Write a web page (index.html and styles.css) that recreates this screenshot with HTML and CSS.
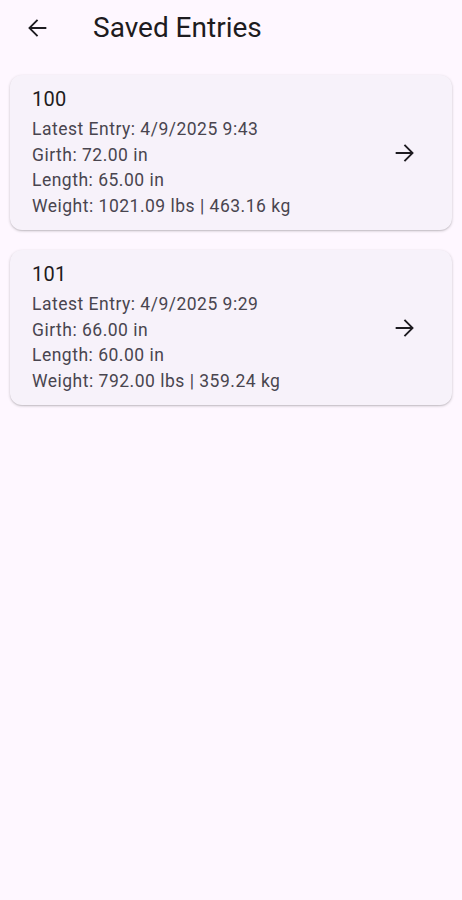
FILE: index.html
```html
<!DOCTYPE html>
<html>
<head>
<meta charset="utf-8">
<link rel="stylesheet" href="styles.css">
</head>
<body>
<header class="appbar">
  <button class="back" aria-label="Back">
    <svg width="28" height="28" viewBox="0 0 24 24"><path d="M20 11.2H7.5l5.55-5.55L11.9 4.5 4.4 12l7.5 7.5 1.15-1.15-5.55-5.55H20z" fill="#1d1b20"/></svg>
  </button>
  <h1 class="title">Saved Entries</h1>
</header>
<main class="list">
  <div class="card">
    <div class="info">
      <div class="name">100</div>
      <div class="line">Latest Entry: 4/9/2025 9:43</div>
      <div class="line">Girth: 72.00 in</div>
      <div class="line">Length: 65.00 in</div>
      <div class="line">Weight: 1021.09 lbs | 463.16 kg</div>
    </div>
    <svg class="go" width="28" height="28" viewBox="0 0 24 24"><path d="M4 11.2h12.5l-5.55-5.55L12.1 4.5l7.5 7.5-7.5 7.5-1.15-1.15 5.55-5.55H4z" fill="#1d1b20"/></svg>
  </div>
  <div class="card">
    <div class="info">
      <div class="name">101</div>
      <div class="line">Latest Entry: 4/9/2025 9:29</div>
      <div class="line">Girth: 66.00 in</div>
      <div class="line">Length: 60.00 in</div>
      <div class="line">Weight: 792.00 lbs | 359.24 kg</div>
    </div>
    <svg class="go" width="28" height="28" viewBox="0 0 24 24"><path d="M4 11.2h12.5l-5.55-5.55L12.1 4.5l7.5 7.5-7.5 7.5-1.15-1.15 5.55-5.55H4z" fill="#1d1b20"/></svg>
  </div>
</main>
</body>
</html>
```
FILE: styles.css
```css
html, body {
  margin: 0;
  padding: 0;
  background: #fef7ff;
  font-family: Roboto, "Noto Sans", sans-serif;
  color: #1d1b20;
}
.appbar {
  height: 56px;
  display: flex;
  align-items: center;
  padding-left: 13px;
}
.back {
  width: 48px;
  height: 48px;
  border: none;
  background: none;
  padding: 0;
  display: flex;
  align-items: center;
  justify-content: center;
}
.title {
  margin: 0 0 0 32px;
  font-size: 28px;
  line-height: 36px;
  font-weight: 400;
  color: #1d1b20;
}
.list {
  padding: 19px 10px;
  display: flex;
  flex-direction: column;
  gap: 20px;
}
.card {
  background: #f7f2fa;
  border-radius: 12px;
  box-shadow: 0 1px 3px rgba(0,0,0,0.2), 0 1px 1px rgba(0,0,0,0.08);
  display: flex;
  align-items: center;
  padding: 11px 33px 10px 22px;
}
.info {
  flex: 1;
}
.name {
  font-size: 20px;
  line-height: 26px;
  letter-spacing: 0.2px;
  color: #1d1b20;
  margin-bottom: 5px;
}
.line {
  font-size: 17.5px;
  line-height: 25.7px;
  letter-spacing: 0.5px;
  color: #49454f;
}
.go {
  display: block;
}
```
